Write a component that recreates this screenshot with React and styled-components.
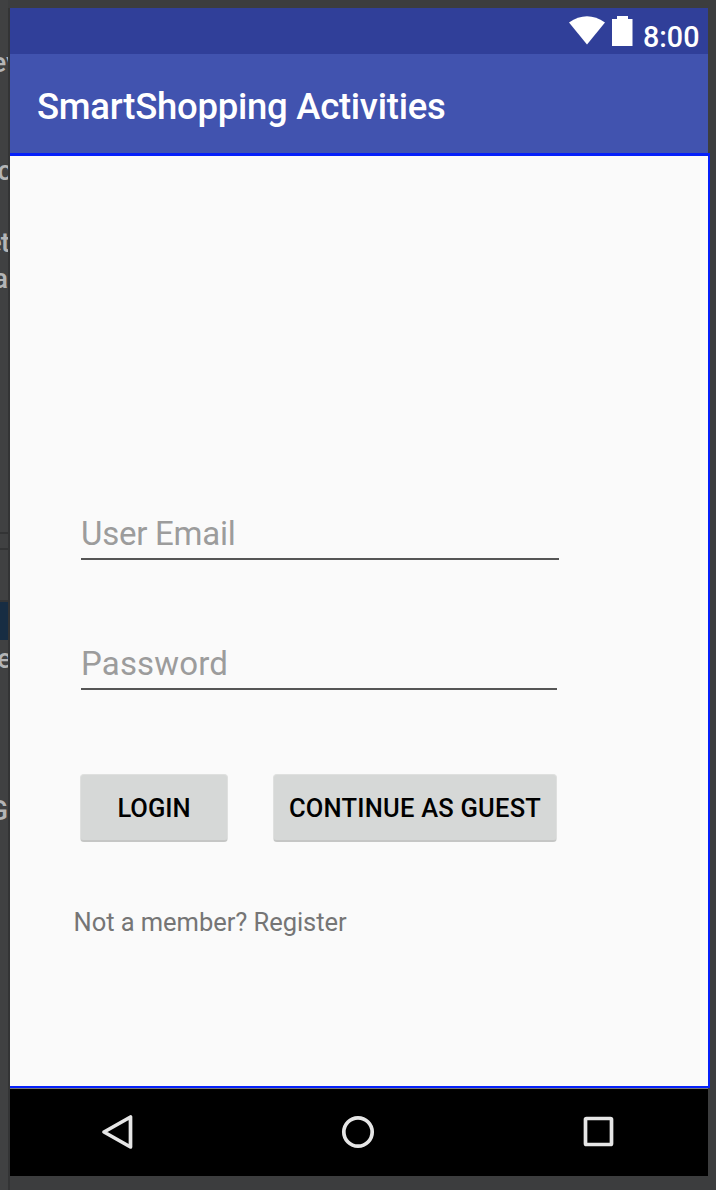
import React from "react";
import styled, { createGlobalStyle } from "styled-components";

const GlobalStyle = createGlobalStyle`
  * { box-sizing: border-box; }
  body { margin: 0; background: #3c3d3e; font-family: Roboto, sans-serif; }
`;

const Editor = styled.div`
  display: grid;
  grid-template-columns: 8px 2px 700px 6px;
  width: 716px;
  height: 1190px;
  overflow: hidden;
  background: #3c3d3e;
`;

const SidePanel = styled.div`
  display: flex;
  flex-direction: column;
  height: 1190px;
  overflow: hidden;
  background: #404142;
`;

const SideRow = styled.div`
  display: flex;
  flex: none;
  justify-content: flex-end;
  align-items: center;
  height: ${(p) => p.$height}px;
  margin-top: ${(p) => p.$gap || 0}px;
  margin-right: ${(p) => p.$shift || 0}px;
  background: ${(p) => p.$fill || "transparent"};
  color: #b4b5b6;
  font: 500 28px/36px Roboto, sans-serif;
  letter-spacing: ${(p) => p.$tracking || 0}px;
  white-space: nowrap;
`;

const Divider = styled.div`
  background: #333435;
  margin-top: ${(p) => p.$top}px;
`;

const Device = styled.main`
  display: flex;
  flex-direction: column;
  padding: 8px 0 14px;
`;

const StatusBar = styled.div`
  display: flex;
  justify-content: flex-end;
  flex: none;
  width: 698px;
  height: 46px;
  padding-right: 9px;
  background: #303f99;
  color: #fff;
`;

const StatusIcons = styled.svg`
  width: 66px;
  height: 40px;
  margin-right: 9px;
`;

const Clock = styled.span`
  width: 56px;
  text-align: right;
  font-size: 28.7px;
  font-weight: 500;
  line-height: 34px;
  padding-top: 12px;
`;

const AppBar = styled.header`
  display: flex;
  align-items: center;
  flex: none;
  width: 698px;
  height: 99px;
  padding: 7px 0 0 27px;
  background: #4153af;
`;

const Title = styled.h1`
  margin: 0;
  color: #fff;
  font-size: 36.5px;
  font-weight: 500;
  letter-spacing: -0.27px;
  line-height: 44px;
  white-space: nowrap;
`;

const Screen = styled.section`
  flex: none;
  width: 700px;
  height: 935px;
  padding: 355px 0 0 64px;
  background: #fafafa;
  border: solid #0520fa;
  border-width: 3px 2px 2px 0;
`;

const Field = styled.input`
  display: block;
  width: ${(p) => p.$width}px;
  height: 49px;
  margin: 0 0 ${(p) => p.$after}px 7px;
  padding: 0 0 2px;
  border: 0;
  border-bottom: 2px solid #555;
  outline: 0;
  background: transparent;
  font-family: Roboto, sans-serif;
  font-size: 33px;
  letter-spacing: ${(p) => p.$tracking}px;
  &::placeholder { color: #9c9c9c; opacity: 1; }
`;

const Actions = styled.div`
  display: flex;
  gap: 45px;
  padding-left: 6px;
`;

const Button = styled.button`
  width: ${(p) => p.$width}px;
  height: 68px;
  padding: 1px 0 0;
  border: 1px solid #dfe0df;
  border-bottom: 2px solid #c5c6c5;
  border-radius: 4px;
  background: #d6d8d7;
  color: #000;
  font-family: Roboto, sans-serif;
  font-size: 25.5px;
  font-weight: 500;
  letter-spacing: ${(p) => p.$tracking || 0}px;
  white-space: nowrap;
`;

const Register = styled.p`
  margin: 64px 0 0 -0.5px;
  color: #757575;
  font-size: 25.5px;
  letter-spacing: -0.05px;
  line-height: 32px;
`;

const NavBar = styled.nav`
  display: flex;
  align-items: center;
  justify-content: space-between;
  flex: none;
  width: 698px;
  height: 88px;
  padding: 0 90px 1px 88px;
  border-top: 1px solid #77777a;
  background: #000;
`;

const NavIcon = styled.svg`
  width: 38px;
  height: 38px;
  fill: none;
  stroke: #e6e6e6;
  stroke-width: 3.7;
  stroke-linejoin: round;
`;

export default function App() {
  return (
    <>
      <GlobalStyle />
      <Editor>
        <SidePanel>
          <SideRow $gap={45} $height={36} $shift={-12}>ev</SideRow>
          <SideRow $gap={72} $height={36} $shift={-4}>c</SideRow>
          <SideRow $gap={36} $height={36} $shift={-1} $tracking={-1}>et</SideRow>
          <SideRow $height={36}>a</SideRow>
          <SideRow $gap={235} $height={2} $fill="#333435" />
          <SideRow $gap={14} $height={2} $fill="#333435" />
          <SideRow $gap={50} $height={2} $fill="#343536" />
          <SideRow $height={38} $fill="#172d43" />
          <SideRow $gap={1} $height={36} $shift={-4}>e</SideRow>
          <SideRow $gap={116} $height={36}>G</SideRow>
        </SidePanel>
        <Divider $top={8} />
        <Device>
          <StatusBar>
            <StatusIcons viewBox="0 0 66 40" fill="#fff">
              <path d="M1 14.5Q19 2 37 14.5L19 36.5Z" />
              <path d="M49 8H60V11H64.5V38H44V11H49Z" />
            </StatusIcons>
            <Clock>8:00</Clock>
          </StatusBar>
          <AppBar>
            <Title>SmartShopping Activities</Title>
          </AppBar>
          <Screen>
            <Field $width={478} $after={81} $tracking={-0.25} placeholder="User Email" aria-label="User Email" />
            <Field $width={476} $after={84} $tracking={0.15} placeholder="Password" aria-label="Password" type="password" />
            <Actions>
              <Button $width={148}>LOGIN</Button>
              <Button $width={284} $tracking={0.22}>CONTINUE AS GUEST</Button>
            </Actions>
            <Register>Not a member? Register</Register>
          </Screen>
          <NavBar>
            <NavIcon viewBox="0 0 38 38"><path d="M6 19L32.5 4V34Z" /></NavIcon>
            <NavIcon viewBox="0 0 38 38"><circle cx="19" cy="19" r="14.2" /></NavIcon>
            <NavIcon viewBox="0 0 38 38"><rect x="5.5" y="5.5" width="26" height="26" rx="1" /></NavIcon>
          </NavBar>
        </Device>
      </Editor>
    </>
  );
}
